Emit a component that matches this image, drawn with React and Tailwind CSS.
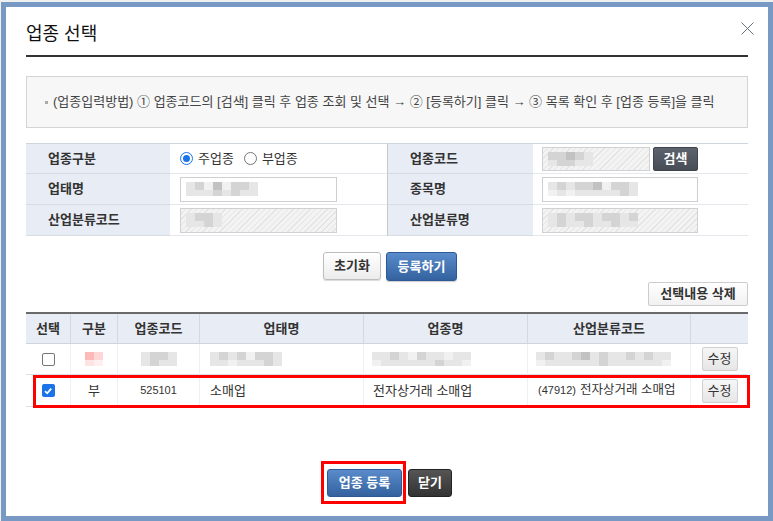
import React from "react";

const FONT = "font-['Liberation_Sans','Noto_Sans_CJK_KR',sans-serif]";
const HATCH =
  "bg-[image:repeating-linear-gradient(135deg,#f3f3f3_0px,#f3f3f3_3px,#e4e4e4_3px,#e4e4e4_4px)]";

// pixelated (redacted) text stand-in
function Blur({ cells }) {
  return (
    <div className="flex flex-col">
      <div className="flex">
        {cells.map((c, i) => (
          <div key={i} className={`h-[8px] w-[9px] ${c[0]}`} />
        ))}
      </div>
      <div className="flex">
        {cells.map((c, i) => (
          <div key={i} className={`h-[6px] w-[9px] ${c[1]}`} />
        ))}
      </div>
    </div>
  );
}

function Radio({ checked, label }) {
  return (
    <label className="flex items-center gap-[5px]">
      <span
        className={`flex h-[13px] w-[13px] items-center justify-center rounded-full border ${
          checked ? "border-[#1a73e8]" : "border-[#767676]"
        } bg-white`}
      >
        {checked && <span className="h-[7px] w-[7px] rounded-full bg-[#1a73e8]" />}
      </span>
      <span className="text-[13px] text-[#333]">{label}</span>
    </label>
  );
}

function Check({ checked }) {
  if (checked) {
    return (
      <span className="flex h-[13px] w-[13px] items-center justify-center rounded-[2px] bg-[#1a73e8]">
        <svg width="10" height="10" viewBox="0 0 10 10">
          <path d="M2 5.2 L4.2 7.3 L8.2 2.6" fill="none" stroke="white" strokeWidth="1.8" />
        </svg>
      </span>
    );
  }
  return <span className="block h-[13px] w-[13px] rounded-[2px] border border-[#767676] bg-white" />;
}

function EditButton() {
  return (
    <button className="h-[24px] w-[36px] rounded-[2px] border border-[#cfcfcf] bg-gradient-to-b from-[#f6f6f6] to-[#e6e6e6] text-[13px] text-[#333]">
      수정
    </button>
  );
}

const labelCell = "flex items-center bg-[#e8ecf4] pl-[22px] text-[13px] font-bold text-[#333]";

export default function App() {
  const g1 = "bg-[#d4d4d4]";
  const g2 = "bg-[#e6e6e6]";
  const g3 = "bg-[#c2c2c2]";
  const g4 = "bg-[#f1f1f1]";

  return (
    <div className={`h-[521px] w-[773px] overflow-hidden bg-[#f0f0f0] pl-[1px] pt-[2px] ${FONT}`}>
      <div className="relative h-[519px] w-[772px] border-[5px] border-[#7899c4] bg-white px-[20px]">
        <button className="absolute right-[14px] top-[15px]">
          <svg width="13" height="13" viewBox="0 0 13 13">
            <path d="M0.5 0.5 L12.5 12.5 M12.5 0.5 L0.5 12.5" stroke="#6b7280" strokeWidth="1" />
          </svg>
        </button>

        <div className="border-b-2 border-[#333] pb-[9px] pt-[15px]">
          <h1 className="text-[18px] leading-[24px] text-[#111]">업종 선택</h1>
        </div>

        <div className="mt-[19px] flex h-[52px] items-center border border-[#d4d4d4] bg-[#f7f7f7] pl-[18px] text-[13px] text-[#444]">
          <span className="mr-[5px] h-[3px] w-[3px] bg-[#aaa]" />
          (업종입력방법) ① 업종코드의 [검색] 클릭 후 업종 조회 및 선택 → ② [등록하기] 클릭 → ③ 목록 확인 후 [업종 등록]을 클릭
        </div>

        <div className="mt-[15px] grid grid-cols-[144px_217px_146px_215px] border-t border-[#cfd5df]">
          <div className={`${labelCell} h-[30px] border-b border-[#d6dbe4]`}>업종구분</div>
          <div className="flex h-[30px] items-center gap-[10px] border-b border-[#e4e7ec] pl-[10px]">
            <Radio checked label="주업종" />
            <Radio label="부업종" />
          </div>
          <div className={`${labelCell} h-[30px] border-b border-l border-[#d6dbe4] border-l-[#c8c8c8]`}>업종코드</div>
          <div className="flex h-[30px] items-center gap-[3px] border-b border-[#e4e7ec] pl-[9px]">
            <div className={`flex h-[24px] w-[108px] items-center border border-[#d0d0d0] pl-[5px] ${HATCH}`}>
              <Blur cells={[[g1, g2], [g1, g1], [g3, g1], [g1, g2], [g2, g2]]} />
            </div>
            <button className="h-[24px] w-[45px] rounded-[2px] border border-[#3f444c] bg-gradient-to-b from-[#5d636d] to-[#474c55] text-[13px] font-bold text-white">
              검색
            </button>
          </div>

          <div className={`${labelCell} h-[31px] border-b border-[#d6dbe4]`}>업태명</div>
          <div className="flex h-[31px] items-center border-b border-[#e4e7ec] pl-[10px]">
            <div className="flex h-[25px] w-[157px] items-center border border-[#cfcfcf] bg-white pl-[5px]">
              <Blur cells={[[g2, g2], [g1, g2], [g4, g2], [g3, g1], [g4, g2], [g1, g1], [g1, g2], [g2, g2]]} />
            </div>
          </div>
          <div className={`${labelCell} h-[31px] border-b border-l border-[#d6dbe4] border-l-[#c8c8c8]`}>종목명</div>
          <div className="flex h-[31px] items-center border-b border-[#e4e7ec] pl-[9px]">
            <div className="flex h-[25px] w-[156px] items-center border border-[#cfcfcf] bg-white pl-[5px]">
              <Blur
                cells={[[g2, g4], [g1, g2], [g2, g4], [g1, g2], [g1, g2], [g3, g2], [g4, g2], [g1, g2], [g1, g1], [g2, g2]]}
              />
            </div>
          </div>

          <div className={`${labelCell} h-[31px] border-b border-[#d6dbe4]`}>산업분류코드</div>
          <div className="flex h-[31px] items-center border-b border-[#e4e7ec] pl-[10px]">
            <div className={`flex h-[25px] w-[157px] items-center border border-[#d0d0d0] pl-[5px] ${HATCH}`}>
              <Blur cells={[[g2, g2], [g1, g2], [g1, g1], [g2, g2]]} />
            </div>
          </div>
          <div className={`${labelCell} h-[31px] border-b border-l border-[#d6dbe4] border-l-[#c8c8c8]`}>산업분류명</div>
          <div className="flex h-[31px] items-center border-b border-[#e4e7ec] pl-[9px]">
            <div className={`flex h-[25px] w-[156px] items-center border border-[#d0d0d0] pl-[5px] ${HATCH}`}>
              <Blur
                cells={[[g2, g2], [g1, g1], [g2, g2], [g1, g2], [g1, g1], [g2, g2], [g1, g2], [g1, g1], [g2, g2], [g1, g2]]}
              />
            </div>
          </div>
        </div>

        <div className="ml-[6px] mt-[16px] flex justify-center gap-[5px]">
          <button className="h-[28px] w-[58px] rounded-[3px] border border-[#bdbdbd] bg-gradient-to-b from-white to-[#ececec] text-[13px] font-bold text-[#333] shadow-[0_1px_1px_rgba(0,0,0,0.15)]">
            초기화
          </button>
          <button className="h-[29px] w-[71px] rounded-[3px] border border-[#2d5a96] bg-gradient-to-b from-[#5a8bca] to-[#33629f] text-[13px] font-bold text-white shadow-[0_1px_1px_rgba(0,0,0,0.2)]">
            등록하기
          </button>
        </div>

        <div className="mt-px flex justify-end">
          <button className="h-[24px] w-[100px] rounded-[2px] border border-[#cccccc] bg-gradient-to-b from-white to-[#f1f1f1] text-[13px] font-bold text-[#333]">
            선택내용 삭제
          </button>
        </div>

        <div className="relative mt-[6px]">
          <div className="grid grid-cols-[44px_47px_82px_164px_164px_163px_58px] border-t-2 border-[#6a6a6a] text-[13px] text-[#333]">
            {["선택", "구분", "업종코드", "업태명", "업종명", "산업분류코드", ""].map((h, i) => (
              <div
                key={i}
                className={`flex h-[30px] items-center justify-center border-b border-[#cfd5df] bg-[#e8ecf4] font-bold ${
                  i > 0 ? "border-l border-l-[#d3d9e3]" : ""
                }`}
              >
                {h}
              </div>
            ))}

            <div className="flex h-[31px] items-center justify-center border-b border-[#dde1e7]">
              <Check />
            </div>
            <div className="flex h-[31px] items-center justify-center border-b border-l border-[#dde1e7] border-l-[#eef0f3]">
              <Blur cells={[["bg-[#fbb9b9]", "bg-[#fde3e3]"], ["bg-[#fdd6d6]", "bg-[#fef0f0]"]]} />
            </div>
            <div className="flex h-[31px] items-center justify-center border-b border-l border-[#dde1e7] border-l-[#eef0f3]">
              <Blur cells={[[g2, g2], [g1, g1], [g1, g2], [g2, g2]]} />
            </div>
            <div className="flex h-[31px] items-center border-b border-l border-[#dde1e7] border-l-[#eef0f3] pl-[10px]">
              <Blur cells={[[g2, g2], [g1, g2], [g2, g4], [g1, g2], [g4, g2], [g1, g2], [g1, g1], [g2, g2]]} />
            </div>
            <div className="flex h-[31px] items-center border-b border-l border-[#dde1e7] border-l-[#eef0f3] pl-[8px]">
              <Blur
                cells={[[g2, g4], [g2, g2], [g1, g2], [g2, g2], [g4, g2], [g1, g2], [g2, g2], [g2, g1], [g4, g2], [g2, g2], [g2, g4]]}
              />
            </div>
            <div className="flex h-[31px] items-center border-b border-l border-[#dde1e7] border-l-[#eef0f3] pl-[8px]">
              <Blur
                cells={[[g2, g4], [g1, g2], [g2, g2], [g2, g2], [g1, g2], [g3, g2], [g2, g2], [g1, g1], [g2, g2], [g2, g2], [g1, g2], [g2, g2], [g1, g2], [g2, g2], [g2, g4]]}
              />
            </div>
            <div className="flex h-[31px] items-center justify-center border-b border-l border-[#dde1e7] border-l-[#eef0f3]">
              <EditButton />
            </div>

            <div className="flex h-[32px] items-center justify-center border-b border-[#dde1e7]">
              <Check checked />
            </div>
            <div className="flex h-[32px] items-center justify-center border-b border-l border-[#dde1e7] border-l-[#eef0f3]">부</div>
            <div className="flex h-[32px] items-center justify-center border-b border-l border-[#dde1e7] border-l-[#eef0f3] text-[11px]">
              525101
            </div>
            <div className="flex h-[32px] items-center border-b border-l border-[#dde1e7] border-l-[#eef0f3] pl-[10px]">소매업</div>
            <div className="flex h-[32px] items-center border-b border-l border-[#dde1e7] border-l-[#eef0f3] pl-[9px]">
              전자상거래 소매업
            </div>
            <div className="flex h-[32px] items-center border-b border-l border-[#dde1e7] border-l-[#eef0f3] pl-[10px]">
              <span className="mr-[4px] text-[11px]">(47912)</span>
              <span className="text-[12.5px]">전자상거래 소매업</span>
            </div>
            <div className="flex h-[32px] items-center justify-center border-b border-l border-[#dde1e7] border-l-[#eef0f3]">
              <EditButton />
            </div>
          </div>
          <div className="pointer-events-none absolute left-[7px] top-[63px] h-[33px] w-[717px] border-[3px] border-[#ff0000]" />
        </div>

        <div className="mt-[62px] flex justify-center gap-[6px] pl-[5px]">
          <div className="relative">
            <button className="h-[28px] w-[75px] rounded-[3px] border border-[#2d5a96] bg-gradient-to-b from-[#5a8bca] to-[#33629f] text-[13px] font-bold text-white">
              업종 등록
            </button>
            <div className="pointer-events-none absolute -bottom-[7px] -left-[6px] -right-[4px] -top-[8px] border-[3px] border-[#ff0000]" />
          </div>
          <button className="h-[28px] w-[44px] rounded-[3px] border border-[#222] bg-gradient-to-b from-[#555] to-[#333] text-[13px] font-bold text-white">
            닫기
          </button>
        </div>
      </div>
    </div>
  );
}
